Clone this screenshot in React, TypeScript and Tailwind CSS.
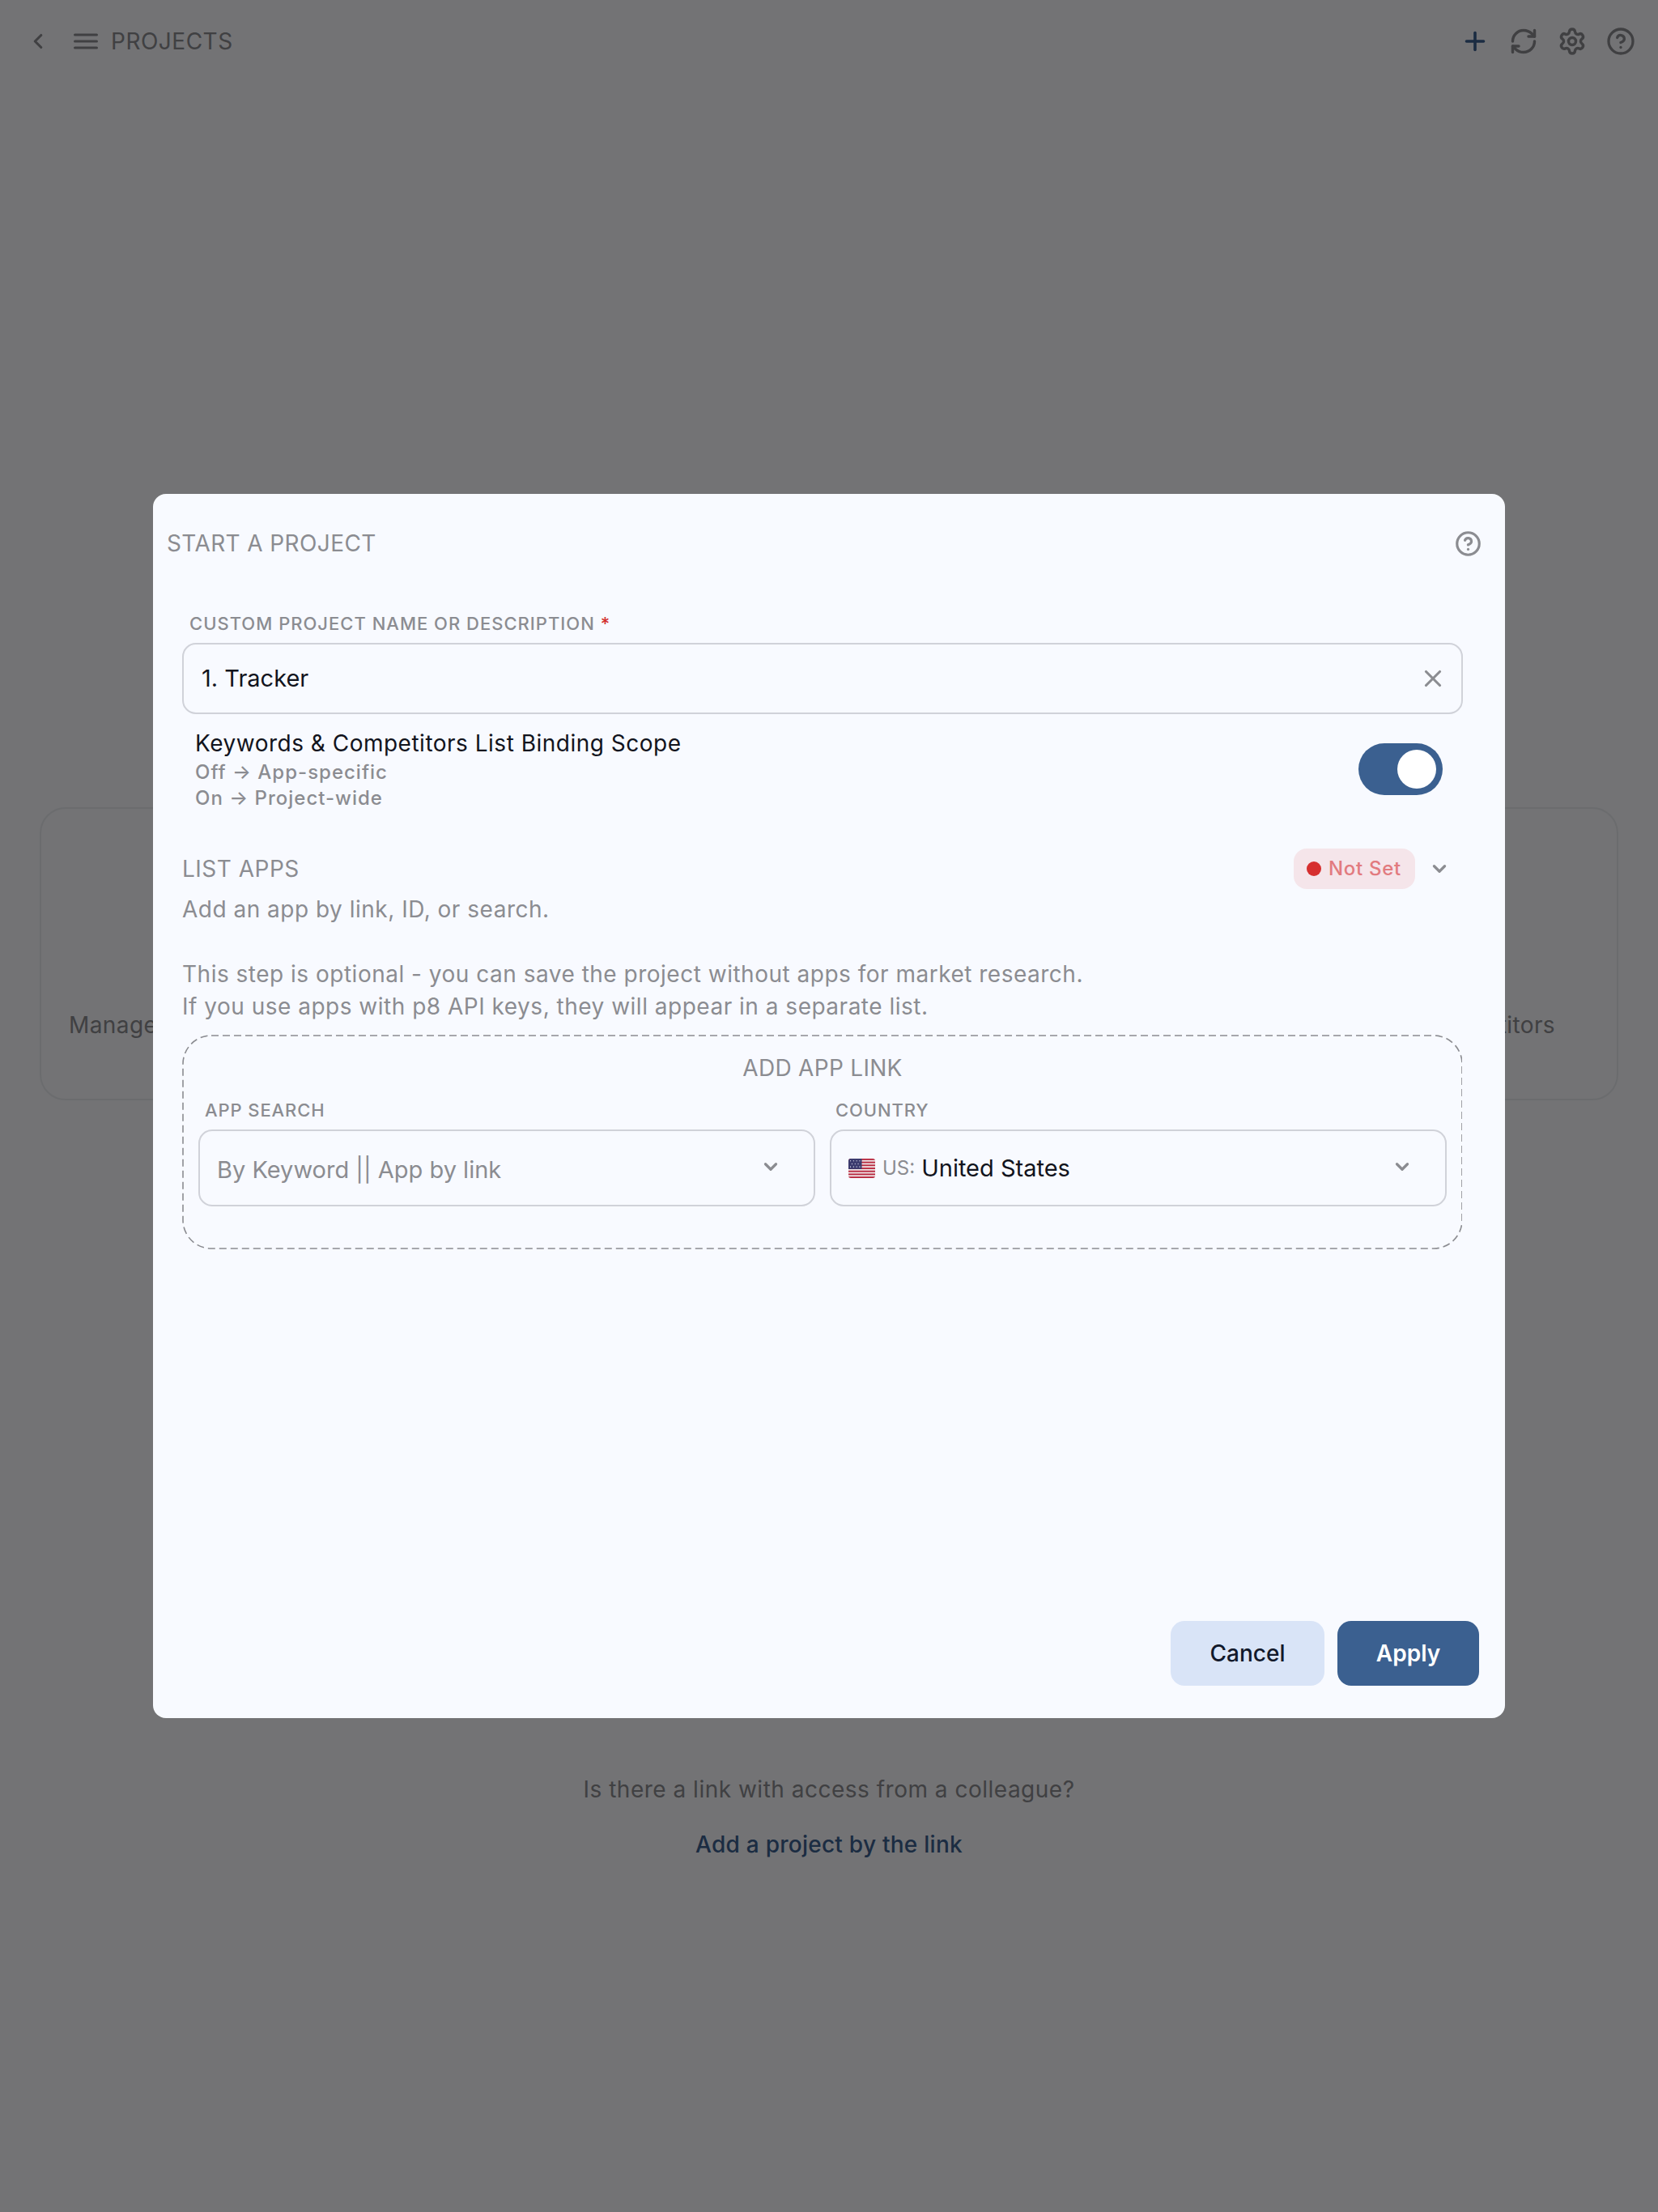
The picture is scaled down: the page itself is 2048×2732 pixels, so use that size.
import { ChevronDown, ChevronLeft, CircleHelp, Plus, RefreshCw, Settings, X } from "lucide-react";

function UsFlag() {
  const stripes = [0, 2, 4, 6, 8, 10, 12];
  const stars = [
    [2, 1.5], [5, 1.5], [8, 1.5], [11, 1.5],
    [3.5, 3.5], [6.5, 3.5], [9.5, 3.5],
    [2, 5.5], [5, 5.5], [8, 5.5], [11, 5.5],
  ];
  return (
    <svg width="33" height="24" viewBox="0 0 26 13" preserveAspectRatio="none" className="shrink-0 rounded-[3px]">
      <rect width="26" height="13" fill="#eee4e6" />
      {stripes.map((y) => (
        <rect key={y} y={y} width="26" height="1" fill="#b8283f" />
      ))}
      <rect width="13" height="7" fill="#3c3b6e" />
      {stars.map(([x, y]) => (
        <circle key={`${x}-${y}`} cx={x} cy={y} r="0.45" fill="#d8d8e8" />
      ))}
    </svg>
  );
}

function MenuIcon() {
  return (
    <svg width="30" height="20" viewBox="0 0 30 20" className="shrink-0" stroke="currentColor" strokeWidth="3" strokeLinecap="round">
      <path d="M1.5 2h27M1.5 10h27M1.5 18h27" />
    </svg>
  );
}

function Background() {
  return (
    <div className="h-full bg-[#fafafe] text-[#8b8c91]">
      <header className="flex h-[102px] items-center pl-[32px] pr-[28px]">
        <ChevronLeft size={30} strokeWidth={2.5} />
        <div className="ml-[29px]">
          <MenuIcon />
        </div>
        <p className="ml-[16px] text-[28px] tracking-[0.5px]">PROJECTS</p>
        <div className="ml-auto flex items-center gap-[24px]">
          <Plus size={36} strokeWidth={2.4} className="text-[#3b6090]" />
          <RefreshCw size={36} strokeWidth={2.3} />
          <Settings size={36} strokeWidth={2.3} />
          <CircleHelp size={36} strokeWidth={2.2} />
        </div>
      </header>
      <section className="mx-[49px] mt-[895px] flex h-[362px] gap-[48px]">
        <div className="flex flex-1 items-end rounded-[32px] border-2 border-[#e9ebf0] px-[34px] pb-[71px]">
          <p className="text-[28px] leading-[40px] tracking-[0.4px]">Manage</p>
        </div>
        <div className="flex flex-1 items-end justify-end rounded-[32px] border-2 border-[#e9ebf0] px-[76px] pb-[71px]">
          <p className="text-[28px] leading-[40px] tracking-[0.4px]">Competitors</p>
        </div>
      </section>
      <section className="mt-[831px] text-center">
        <p className="text-[28px] leading-[40px] tracking-[0.5px]">Is there a link with access from a colleague?</p>
        <p className="mt-[28px] text-[28px] font-medium leading-[40px] tracking-[0.25px] text-[#3b6090]">
          Add a project by the link
        </p>
      </section>
    </div>
  );
}

function Dialog() {
  return (
    <div className="flex h-[1512px] w-[1670px] flex-col rounded-[16px] bg-[#f8faff] text-[#8b8c91]">
      <div className="mb-[22px] flex h-[122px] shrink-0 items-center justify-between pl-[17px] pr-[29px]">
        <h2 className="text-[28px] tracking-[0.4px]">START A PROJECT</h2>
        <CircleHelp size={33} strokeWidth={2.3} />
      </div>

      <div className="ml-[36px] mr-[52px] flex flex-1 flex-col">
        <label className="ml-[9px] block text-[22px] font-medium leading-[32px] tracking-[1px]">
          CUSTOM PROJECT NAME OR DESCRIPTION <span className="text-[#d32f2f]">*</span>
        </label>
        <div className="mt-[8px] flex h-[88px] items-center rounded-[17px] border-2 border-[#d0d2d9] pl-[22px] pr-[18px]">
          <input
            readOnly
            value="1. Tracker"
            className="flex-1 bg-transparent text-[29px] text-[#12141d] outline-none"
          />
          <X size={34} strokeWidth={2.2} />
        </div>

        <div className="mt-[16px] flex items-center justify-between pl-[16px] pr-[25px]">
          <div>
            <p className="text-[28px] leading-[40px] tracking-[0.5px] text-[#12141d]">
              Keywords &amp; Competitors List Binding Scope
            </p>
            <p className="text-[24px] font-medium leading-[32px] tracking-[1px]">Off → App-specific</p>
            <p className="text-[24px] font-medium leading-[32px] tracking-[1px]">On → Project-wide</p>
          </div>
          <div className="flex h-[64px] w-[104px] items-center justify-end rounded-full bg-[#3b6090] pr-[8px]">
            <div className="h-[48px] w-[48px] rounded-full bg-white" />
          </div>
        </div>

        <div className="mt-[46px] flex h-[50px] items-center justify-between pr-[16px]">
          <h3 className="text-[28px] tracking-[0.5px]">LIST APPS</h3>
          <div className="flex items-center gap-[17px]">
            <div className="flex h-[50px] w-[150px] items-center gap-[9px] rounded-[16px] bg-[#f5e5ea] pl-[16px]">
              <span className="h-[18px] w-[18px] rounded-full bg-[#d62f2f]" />
              <span className="text-[24px] font-medium tracking-[0.7px] text-[#e27b7f]">Not Set</span>
            </div>
            <ChevronDown size={26} strokeWidth={3} />
          </div>
        </div>

        <div className="mt-[5px] text-[28px] leading-[40px] tracking-[0.5px]">
          <p>Add an app by link, ID, or search.</p>
          <p className="mt-[40px]">This step is optional - you can save the project without apps for market research.</p>
          <p>If you use apps with p8 API keys, they will appear in a separate list.</p>
        </div>

        <div className="relative mt-[15px] h-[265px] px-[20px] pt-[21px]">
          <svg width="1581" height="265" className="pointer-events-none absolute inset-0">
            <rect
              x="1"
              y="1"
              width="1580"
              height="263"
              rx="35"
              fill="none"
              stroke="#8b8c91"
              strokeWidth="1.6"
              strokeDasharray="9 5"
            />
          </svg>
          <h4 className="text-center text-[28px] leading-[40px] tracking-[0.3px]">ADD APP LINK</h4>
          <div className="mt-[20px] grid grid-cols-2 gap-[18px]">
            <div>
              <label className="ml-[8px] block text-[22px] font-medium leading-[24px] tracking-[0.9px]">APP SEARCH</label>
              <div className="mt-[12px] flex h-[95px] items-center rounded-[17px] border-2 border-[#d0d2d9] pl-[21px] pr-[40px]">
                <input
                  readOnly
                  placeholder="By Keyword || App by link"
                  className="mt-[5px] flex-1 bg-transparent text-[29px] outline-none placeholder:text-[#8b8c91]"
                />
                <ChevronDown size={26} strokeWidth={3} className="-mt-[4px]" />
              </div>
            </div>
            <div>
              <label className="ml-[7px] block text-[22px] font-medium leading-[24px] tracking-[0.9px]">COUNTRY</label>
              <div className="mt-[12px] flex h-[95px] items-center rounded-[17px] border-2 border-[#d0d2d9] pl-[21px] pr-[40px]">
                <UsFlag />
                <span className="ml-[9px] text-[24px]">US:</span>
                <span className="ml-[8px] text-[29px] text-[#12141d]">United States</span>
                <ChevronDown size={26} strokeWidth={3} className="-mt-[4px] ml-auto" />
              </div>
            </div>
          </div>
        </div>
      </div>

      <div className="mb-[40px] mr-[32px] flex justify-end gap-[16px]">
        <button className="h-[80px] w-[190px] rounded-[17px] bg-[#d9e4f7] text-[28px] font-medium text-[#12192b]">
          Cancel
        </button>
        <button className="h-[80px] w-[175px] rounded-[17px] bg-[#3b6090] text-[28px] font-semibold text-white">
          Apply
        </button>
      </div>
    </div>
  );
}

export default function App() {
  return (
    <div className="relative h-[2732px] w-full overflow-hidden [font-family:Inter,sans-serif]">
      <Background />
      <div className="absolute inset-0 flex items-center justify-center bg-[rgba(0,0,0,0.54)]">
        <Dialog />
      </div>
    </div>
  );
}
